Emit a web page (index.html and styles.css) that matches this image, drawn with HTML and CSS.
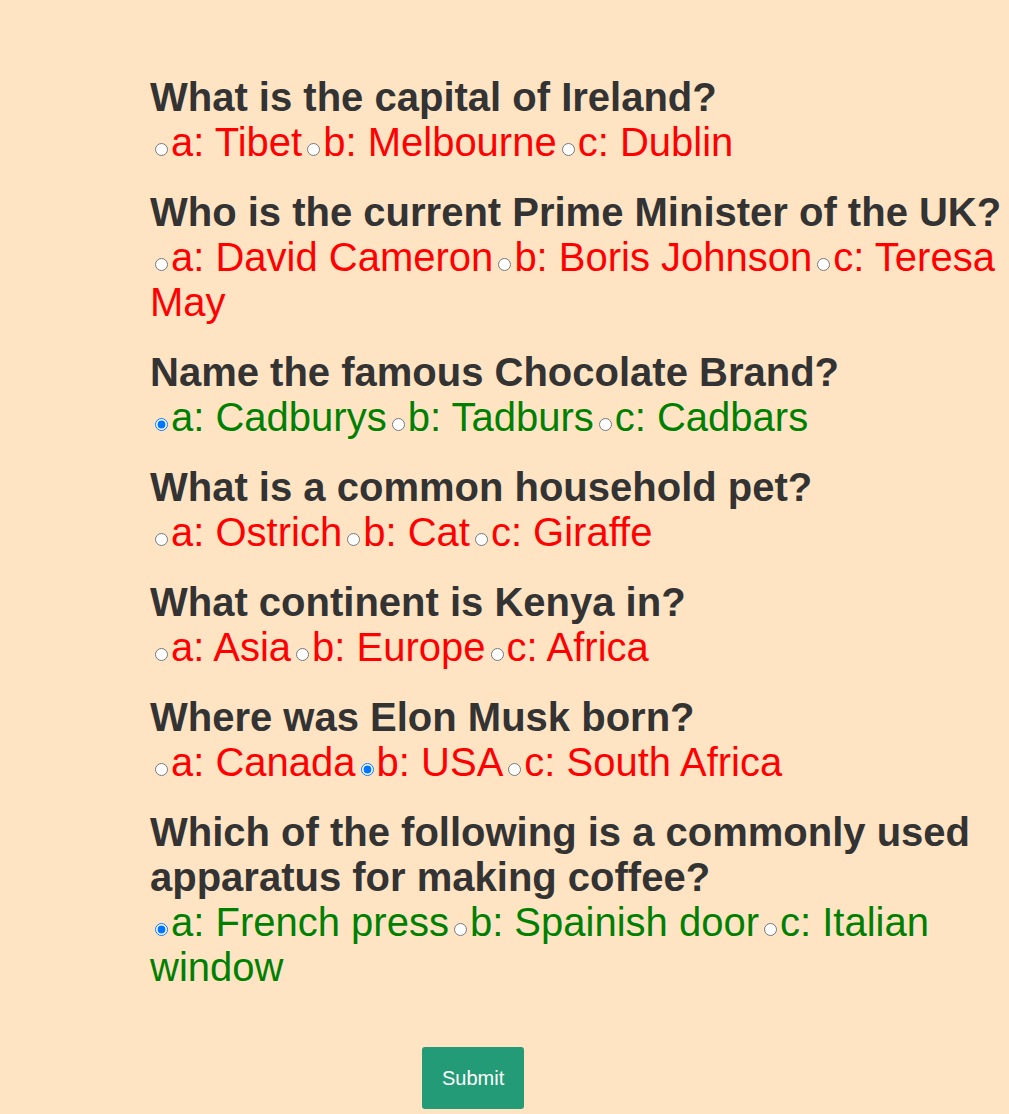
FILE: index.html
```html
<!DOCTYPE html>
<html>
<head>
<meta charset="utf-8">
<title>Quiz</title>
<link rel="stylesheet" href="styles.css">
</head>
<body>
<form class="quiz">
  <div class="q">
    <div class="question">What is the capital of Ireland?</div>
    <div class="answers wrong"><input type="radio" name="q1"><label>a: Tibet</label><input type="radio" name="q1"><label>b: Melbourne</label><input type="radio" name="q1"><label>c: Dublin</label></div>
  </div>
  <div class="q">
    <div class="question">Who is the current Prime Minister of the UK?</div>
    <div class="answers wrong"><input type="radio" name="q2"><label>a: David Cameron</label><input type="radio" name="q2"><label>b: Boris Johnson</label><input type="radio" name="q2"><label>c: Teresa May</label></div>
  </div>
  <div class="q">
    <div class="question">Name the famous Chocolate Brand?</div>
    <div class="answers right"><input type="radio" name="q3" checked><label>a: Cadburys</label><input type="radio" name="q3"><label>b: Tadburs</label><input type="radio" name="q3"><label>c: Cadbars</label></div>
  </div>
  <div class="q">
    <div class="question">What is a common household pet?</div>
    <div class="answers wrong"><input type="radio" name="q4"><label>a: Ostrich</label><input type="radio" name="q4"><label>b: Cat</label><input type="radio" name="q4"><label>c: Giraffe</label></div>
  </div>
  <div class="q">
    <div class="question">What continent is Kenya in?</div>
    <div class="answers wrong"><input type="radio" name="q5"><label>a: Asia</label><input type="radio" name="q5"><label>b: Europe</label><input type="radio" name="q5"><label>c: Africa</label></div>
  </div>
  <div class="q">
    <div class="question">Where was Elon Musk born?</div>
    <div class="answers wrong"><input type="radio" name="q6"><label>a: Canada</label><input type="radio" name="q6" checked><label>b: USA</label><input type="radio" name="q6"><label>c: South Africa</label></div>
  </div>
  <div class="q">
    <div class="question">Which of the following is a commonly used apparatus for making coffee?</div>
    <div class="answers right"><input type="radio" name="q7" checked><label>a: French press</label><input type="radio" name="q7"><label>b: Spainish door</label><input type="radio" name="q7"><label>c: Italian window</label></div>
  </div>
  <div class="actions">
    <button type="button" class="submit">Submit</button>
  </div>
</form>
</body>
</html>
```
FILE: styles.css
```css
html, body {
  margin: 0;
  padding: 0;
  background: #ffe4c4;
}
body {
  font-family: "Liberation Sans", Arial, sans-serif;
}
.quiz {
  padding: 75px 0 0 150px;
}
.q {
  margin-bottom: 25px;
}
.question {
  font-size: 40px;
  line-height: 45px;
  font-weight: bold;
  color: #333333;
}
.answers {
  font-size: 40px;
  line-height: 45px;
}
.answers input {
  margin: 3px 3px 0 5px;
}
.wrong {
  color: #ff0000;
}
.right {
  color: #008000;
}
.actions {
  margin-top: 57px;
  padding-left: 272px;
}
.submit {
  font-family: "Liberation Sans", Arial, sans-serif;
  font-size: 20px;
  line-height: 24px;
  padding: 19px 20px;
  border: none;
  border-radius: 3px;
  background: #239b76;
  color: #ffffff;
}
```
